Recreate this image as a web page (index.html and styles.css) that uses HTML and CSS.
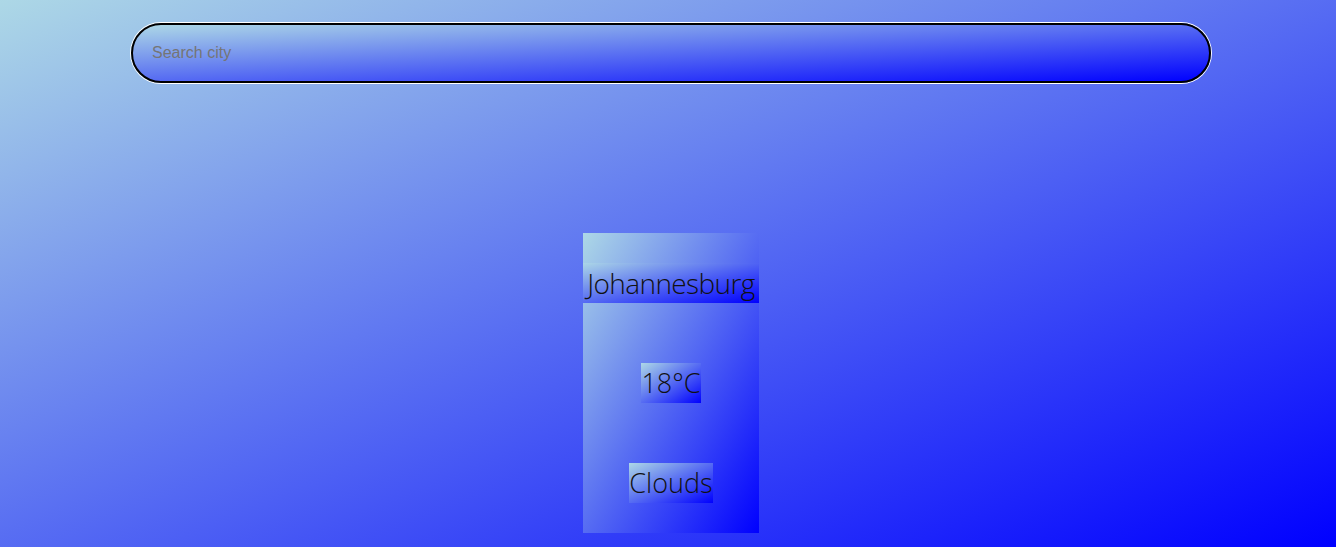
FILE: index.html
```html
<!DOCTYPE html>
<html>
<head>
<meta charset="utf-8">
<link rel="stylesheet" href="styles.css">
</head>
<body>
<div class="app">
  <div class="search-row">
    <input class="search" type="text" placeholder="Search city">
  </div>
  <div class="card">
    <h2 class="city">Johannesburg</h2>
    <p class="chip">18°C</p>
    <p class="chip">Clouds</p>
  </div>
</div>
</body>
</html>
```
FILE: styles.css
```css
html, body {
  margin: 0;
  height: 100%;
}
body {
  background: linear-gradient(to bottom right, lightblue, blue);
  font-family: "Open Sans", "Liberation Sans", sans-serif;
  overflow: hidden;
}
.app {
  display: flex;
  flex-direction: column;
  align-items: center;
  padding-left: 6px;
  padding-top: 23px;
}
.search-row {
  display: flex;
  justify-content: center;
}
.search {
  box-sizing: border-box;
  width: 1080px;
  height: 60px;
  border-radius: 30px;
  border: 2px solid #000;
  box-shadow: 0 0 0 1px #fff;
  background: linear-gradient(to bottom right, lightblue, blue);
  padding: 0 19px;
  font-family: "Liberation Sans", Arial, sans-serif;
  font-size: 16px;
  color: #222;
  outline: none;
}
.search::placeholder {
  color: #757575;
}
.card {
  margin-top: 150px;
  width: 176px;
  height: 300px;
  box-sizing: border-box;
  padding-top: 30px;
  display: flex;
  flex-direction: column;
  align-items: center;
  gap: 60px;
  background: linear-gradient(to bottom right, lightblue, blue);
}
.city {
  margin: 0;
  width: 100%;
  height: 40px;
  line-height: 40px;
  text-align: center;
  font-size: 28px;
  font-weight: 300;
  color: #111;
  white-space: nowrap;
  letter-spacing: -0.6px;
  background: linear-gradient(to bottom right, rgba(173, 216, 230, 0.85), blue);
}
.chip {
  margin: 0;
  height: 40px;
  line-height: 40px;
  font-size: 27px;
  font-weight: 300;
  color: #111;
  white-space: nowrap;
  background: linear-gradient(to bottom right, lightblue, blue);
}
```
